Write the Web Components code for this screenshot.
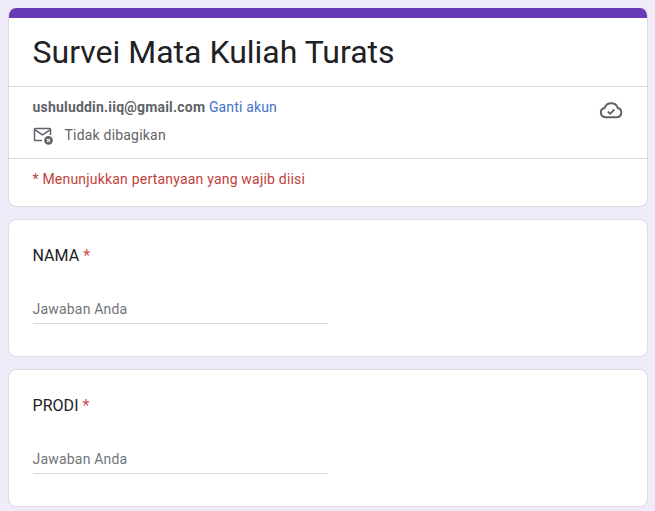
<!DOCTYPE html>
<html><head><meta charset="utf-8"><style>
html,body{margin:0;padding:0;height:511px;overflow:hidden}
body{background:#f0ebf8;font-family:Roboto,sans-serif;padding:8px 7px 0 8px;box-sizing:border-box;display:flex;flex-direction:column;gap:12px}
</style></head><body>
<form-header title-text="Survei Mata Kuliah Turats" email="ushuluddin.iiq@gmail.com"></form-header>
<form-question label="NAMA"></form-question>
<form-question label="PRODI"></form-question>
<script>
class FormHeader extends HTMLElement{
constructor(){super();const s=this.attachShadow({mode:'open'});s.innerHTML=`<style>
:host{display:block;background:#fff;border:1px solid #dadce0;border-top:0;border-radius:8px;overflow:hidden;height:199px;box-sizing:border-box}
.bar{height:10px;background:#673ab7;margin:0 -1px}
h1{margin:0;font:400 32px/40px Roboto,sans-serif;color:#202124;padding:14px 24px 14px 23.500px;height:40px}
.acct{border-top:1px solid #dadce0;padding:10px 24px 0 23.500px;height:61px;display:flex;justify-content:space-between;color:#5f6368;font-size:14px;line-height:20px;letter-spacing:.2px}
.mail{font-weight:700}.sw{color:#3f73c9;letter-spacing:.15px}
.shared{display:flex;align-items:center;gap:12px;margin-top:8px;height:20px}
.shared svg{display:block}
.cloud{margin:1px 0 0}
.req{border-top:1px solid #dadce0;padding:10px 24px 0 23.500px;font-size:14px;line-height:20px;color:#bf3f3c;letter-spacing:.2px}
</style><div class="bar"></div><h1>${this.getAttribute('title-text')}</h1>
<div class="acct"><div><div><span class="mail">${this.getAttribute('email')}</span> <span class="sw">Ganti akun</span></div>
<div class="shared"><svg width="20" height="20" viewBox="0 0 20 20" fill="none"><path d="M9 15.600H2.400a.9.900 0 0 1-.9-.9V4.400a.9.900 0 0 1 .9-.9h14.200a.9.900 0 0 1 .9.900v5.500" stroke="#5f6368" stroke-width="1.500"/><path d="M2 4.900l7.500 5 7.500-5" stroke="#5f6368" stroke-width="1.500"/><circle cx="15.500" cy="15.400" r="4.300" fill="#5f6368"/><path d="M14 13.900l3 3M17 13.900l-3 3" stroke="#fff" stroke-width="1.100"/></svg><span>Tidak dibagikan</span></div></div>
<svg class="cloud" width="24" height="24" viewBox="0 0 24 24" fill="none"><path d="M6.500 19.200a4.700 4.700 0 0 1-.9-9.300A7 7 0 0 1 18.800 10a4.700 4.700 0 0 1-.6 9.200z" stroke="#5f6368" stroke-width="2" stroke-linejoin="round"/><path d="M8.800 13.500l2.300 2.300 4.300-4.300" stroke="#5f6368" stroke-width="1.800"/></svg></div>
<div class="req">* Menunjukkan pertanyaan yang wajib diisi</div>`}}
class FormQuestion extends HTMLElement{
constructor(){super();const s=this.attachShadow({mode:'open'});s.innerHTML=`<style>
:host{display:block;background:#fff;border:1px solid #dadce0;border-radius:8px;height:138px;box-sizing:border-box;padding:25px 23px 0 23.500px}
.q{font-size:16px;line-height:22px;color:#202124;letter-spacing:.05px;height:22px}
.q b{font-weight:400;color:#cf5552}
.a{margin-top:21px;width:295.500px;height:36px;box-sizing:border-box;border-bottom:1px solid #dadce0;font-size:14px;line-height:20px;color:#70757a;padding-top:11px;letter-spacing:.2px}
</style><div class="q">${this.getAttribute('label')} <b>*</b></div><div class="a">Jawaban Anda</div>`}}
customElements.define('form-header',FormHeader);
customElements.define('form-question',FormQuestion);
</script></body></html>
